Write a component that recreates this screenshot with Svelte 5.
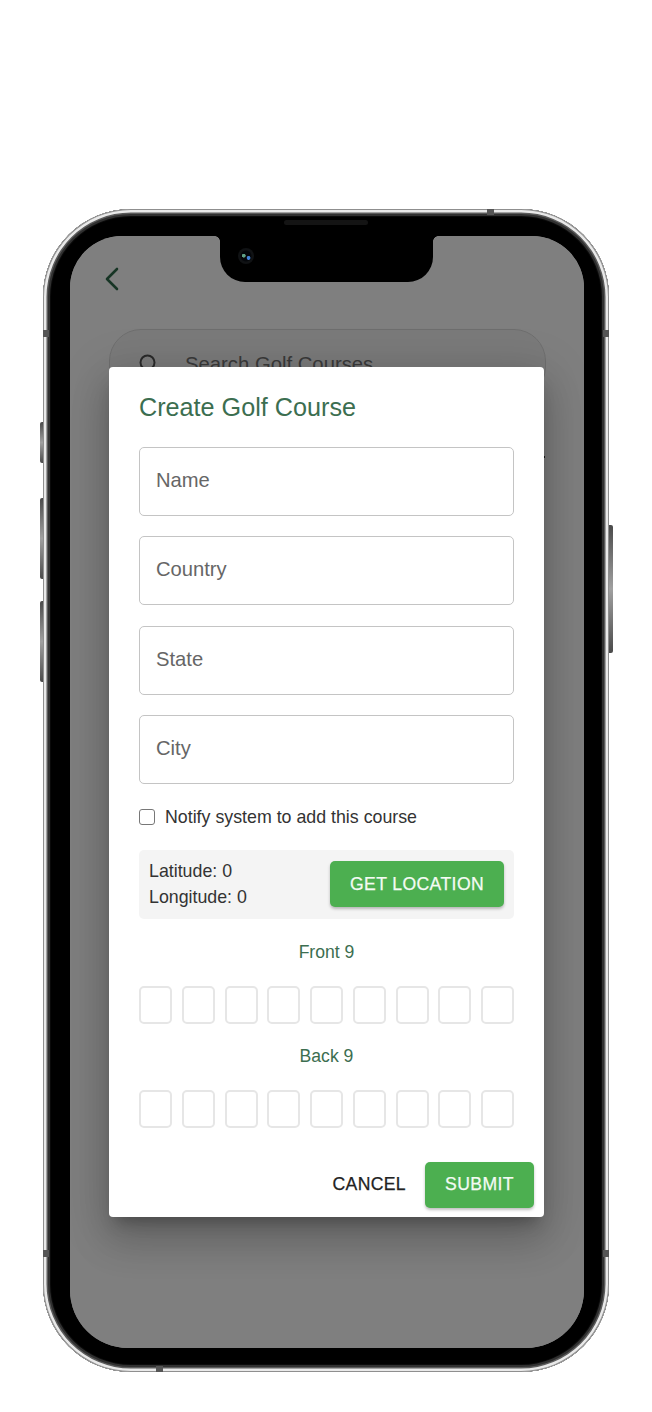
<script>
  const fields = ['Name', 'Country', 'State', 'City'];
  const holes = Array.from({ length: 9 }, (_, i) => i);
  const sections = ['Front 9', 'Back 9'];
  const bands = ['b-top', 'b-bottom', 'b-lt', 'b-rt', 'b-lb', 'b-rb'];
</script>

<main class="page">
  <div class="phone">
    <span class="key k1"></span>
    <span class="key k2"></span>
    <span class="key k3"></span>
    <span class="key k4"></span>
    {#each bands as b}<span class="band {b}"></span>{/each}
    <span class="speaker"></span>

    <div class="screen">
      <div class="under">
        <svg class="back" width="16" height="26" viewBox="0 0 16 26" fill="none" aria-hidden="true">
          <path d="M13 3 3 13l10 10" stroke="#2e6b4a" stroke-width="2.6" stroke-linecap="round" stroke-linejoin="round" />
        </svg>
        <div class="search">
          <svg width="22" height="22" viewBox="0 0 22 22" fill="none" aria-hidden="true">
            <circle cx="9.5" cy="9.5" r="7" stroke="#555" stroke-width="2" />
            <path d="m15 15 5 5" stroke="#555" stroke-width="2" />
          </svg>
          <span>Search Golf Courses</span>
        </div>
        <div class="peek"></div>
      </div>

      <div class="scrim"></div>

      <div class="notch"><span class="camera"></span></div>

      <form class="modal">
        <h1>Create Golf Course</h1>
        <div class="fields">
          {#each fields as f}
            <div class="field">{f}</div>
          {/each}
        </div>
        <label class="check"><span class="box"></span>Notify system to add this course</label>
        <div class="location">
          <div class="coords">
            <div>Latitude: 0</div>
            <div>Longitude: 0</div>
          </div>
          <button type="button" class="btn get">GET LOCATION</button>
        </div>
        {#each sections as s}
          <div class="nine">{s}</div>
          <div class="holes">
            {#each holes as h}<span class="hole"></span>{/each}
          </div>
        {/each}
        <div class="actions">
          <button type="button" class="cancel">CANCEL</button>
          <button type="button" class="btn submit">SUBMIT</button>
        </div>
      </form>
    </div>
  </div>
</main>

<style>
  :global(body) {
    margin: 0;
    background: #fff;
    font-family: "Liberation Sans", Arial, sans-serif;
  }
  .page {
    width: 652px;
    height: 1412px;
    padding: 209px 0 0 43px;
    box-sizing: border-box;
  }
  .phone {
    position: relative;
    width: 566px;
    height: 1163px;
    box-sizing: border-box;
    padding: 27px 25px 24px 27px;
    background: #000;
    border-radius: 88px;
    box-shadow:
      inset 0 0 0 1px #8f8f8f,
      inset 0 0 0 3.5px #e9e9e9,
      inset 0 0 0 5px #5a5a5a,
      inset 0 0 0 7px #303030,
      inset 0 0 0 8px #0a0a0a;
  }
  .key {
    position: absolute;
    width: 3px;
    background: linear-gradient(180deg, #4a4a4a, #a0a0a0 50%, #4a4a4a);
    border-radius: 2px 0 0 2px;
  }
  .k1 { left: -3px; top: 213px; height: 41px; }
  .k2 { left: -3px; top: 289px; height: 81px; }
  .k3 { left: -3px; top: 392px; height: 81px; }
  .k4 { right: -4px; width: 4px; top: 316px; height: 128px; border-radius: 0 2px 2px 0; }
  .band { position: absolute; background: #555; }
  .b-top { left: 444px; top: 0; width: 7px; height: 6px; }
  .b-bottom { left: 113px; bottom: 0; width: 7px; height: 6px; }
  .b-lt { left: 0; top: 121px; width: 6px; height: 7px; }
  .b-rt { right: 0; top: 121px; width: 6px; height: 7px; }
  .b-lb { left: 0; top: 1041px; width: 6px; height: 7px; }
  .b-rb { right: 0; top: 1041px; width: 6px; height: 7px; }
  .speaker {
    position: absolute;
    left: 241px;
    top: 11px;
    width: 84px;
    height: 5px;
    border-radius: 3px;
    background: #141414;
  }
  .screen {
    position: relative;
    height: 100%;
    background: #fff;
    border-radius: 52px 52px 58px 58px;
    overflow: hidden;
  }
  .under {
    display: flex;
    flex-direction: column;
    padding: 30px 39px 0 34px;
  }
  .back { flex: none; }
  .search {
    display: flex;
    align-items: center;
    gap: 25px;
    box-sizing: border-box;
    height: 70px;
    margin: 37px -1px 0 5px;
    padding: 0 0 0 28px;
    border: 1px solid #dcdcdc;
    border-radius: 32px;
    background: #f5f5f5;
    color: #757575;
    font-size: 20.3px;
  }
  .peek {
    width: 436px;
    height: 2px;
    margin: 57px 0 0 5px;
    background: #333;
  }
  .scrim {
    position: absolute;
    inset: 0;
    background: rgba(0, 0, 0, 0.5);
  }
  .notch {
    position: absolute;
    left: 150px;
    top: 0;
    width: 213px;
    height: 46px;
    background: #000;
    border-radius: 0 0 25px 25px;
  }
  .notch::before,
  .notch::after {
    content: "";
    position: absolute;
    top: 0;
    width: 5px;
    height: 5px;
  }
  .notch::before {
    left: -5px;
    background: radial-gradient(circle at 0 100%, transparent 4.5px, #000 5px);
  }
  .notch::after {
    right: -5px;
    background: radial-gradient(circle at 100% 100%, transparent 4.5px, #000 5px);
  }
  .camera {
    position: absolute;
    left: 18px;
    top: 12px;
    width: 16px;
    height: 16px;
    border-radius: 50%;
    background:
      radial-gradient(circle at 66% 62%, #3f7fd6 0 1.6px, transparent 2.2px),
      radial-gradient(circle at 36% 48%, #5f9f85 0 1.6px, transparent 2.2px),
      radial-gradient(circle, #04060a 0 5px, #101214 6px);
  }
  .modal {
    position: absolute;
    left: 39px;
    top: 131px;
    width: 435px;
    height: 850px;
    box-sizing: border-box;
    padding: 26px 30px 0;
    display: flex;
    flex-direction: column;
    background: #fff;
    border-radius: 4px;
    box-shadow:
      0 11px 15px -7px rgba(0, 0, 0, 0.28),
      0 24px 38px 3px rgba(0, 0, 0, 0.14),
      0 9px 46px 8px rgba(0, 0, 0, 0.12);
  }
  h1 {
    margin: 0;
    height: 29px;
    line-height: 29px;
    font-size: 25.2px;
    font-weight: 400;
    color: #3c6e50;
  }
  .fields {
    display: flex;
    flex-direction: column;
    gap: 20.3px;
    margin-top: 25px;
  }
  .field {
    box-sizing: border-box;
    height: 69px;
    padding: 0 16px 2px;
    display: flex;
    align-items: center;
    border: 1px solid #c4c4c4;
    border-radius: 5px;
    font-size: 20.2px;
    color: #666;
  }
  .check {
    display: flex;
    align-items: center;
    gap: 10px;
    height: 20px;
    margin-top: 23.9px;
    font-size: 17.8px;
    color: #333;
  }
  .box {
    width: 16px;
    height: 16px;
    margin-bottom: 2px;
    box-sizing: border-box;
    border: 1px solid #777;
    border-radius: 3px;
  }
  .location {
    display: flex;
    align-items: center;
    justify-content: space-between;
    box-sizing: border-box;
    height: 69px;
    margin-top: 22.2px;
    padding: 0 10px;
    background: #f4f4f4;
    border-radius: 5px;
  }
  .coords {
    font-size: 17.8px;
    line-height: 26px;
    color: #333;
  }
  .btn {
    height: 46px;
    border: 0;
    border-radius: 5px;
    background: #4caf50;
    color: #f4fbf4;
    font-family: inherit;
    font-size: 17.6px;
    letter-spacing: 0.4px;
    -webkit-text-stroke: 0.25px currentColor;
    box-shadow: 0 2px 3px rgba(0, 0, 0, 0.25);
  }
  .get { width: 174px; padding: 0; }
  .nine {
    height: 20px;
    line-height: 20px;
    margin-top: 23px;
    text-align: center;
    font-size: 17.6px;
    color: #3c6e50;
  }
  .nine + .holes { margin-top: 24px; }
  .holes + .nine { margin-top: 22px; }
  .holes {
    display: grid;
    grid-template-columns: repeat(9, 33px);
    justify-content: space-between;
  }
  .hole {
    height: 38px;
    box-sizing: border-box;
    border: 2px solid #e6e6e6;
    border-radius: 5px;
  }
  .actions {
    display: flex;
    align-items: center;
    justify-content: flex-end;
    gap: 19px;
    margin: 34px -20px 0 0;
  }
  .cancel {
    padding: 0;
    border: 0;
    background: none;
    color: #222;
    font-family: inherit;
    font-size: 17.6px;
    letter-spacing: 0.35px;
    -webkit-text-stroke: 0.25px currentColor;
  }
  .submit { width: 109px; padding: 0; }
</style>
